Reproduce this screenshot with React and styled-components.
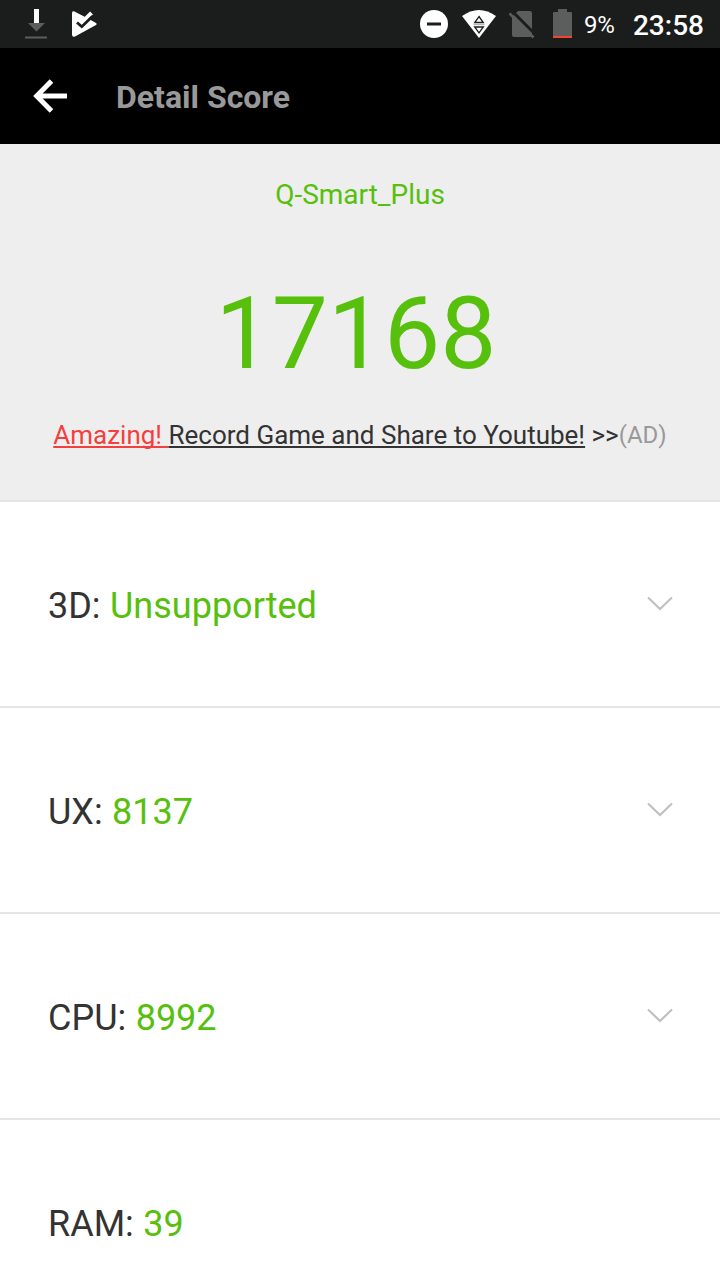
import React from 'react';
import styled, { createGlobalStyle } from 'styled-components';

const GlobalStyle = createGlobalStyle`
  body {
    margin: 0;
    background-color: #fff;
    font-family: Roboto, sans-serif;
    overflow: hidden;
  }
`;

const Screen = styled.div`
  width: 720px;
  height: 1280px;
  overflow: hidden;
  background-color: #fff;
`;

const StatusBar = styled.div`
  display: flex;
  justify-content: space-between;
  height: 48px;
  padding: 0 16px 0 24px;
  box-sizing: border-box;
  background-color: #1b1d1c;
  color: #fff;
`;

const Notifications = styled.div`
  display: flex;
  gap: 23px;
`;

const SystemIcons = styled.div`
  display: flex;
`;

const Icon = styled.svg`
  display: block;
  flex: none;
  margin-right: ${({ $gap }) => $gap || 0}px;
`;

const BatteryLevel = styled.span`
  margin-right: 18px;
  font-size: 24px;
  line-height: 50px;
`;

const Clock = styled.span`
  font-size: 28px;
  font-weight: 500;
  line-height: 51px;
`;

const TitleBar = styled.header`
  display: flex;
  align-items: center;
  height: 96px;
  padding-left: 32px;
  background-color: #000;
`;

const BackButton = styled.button`
  width: 36px;
  height: 36px;
  margin-right: 48px;
  padding: 0;
  border: none;
  background: none;
  cursor: pointer;
`;

const Title = styled.h1`
  margin: 0;
  padding-top: 2px;
  color: #999;
  font-size: 32px;
  font-weight: bold;
`;

const Summary = styled.section`
  display: flex;
  flex-direction: column;
  align-items: center;
  height: 358px;
  padding-top: 34px;
  box-sizing: border-box;
  border-bottom: 2px solid #e5e5e5;
  background-color: #eee;
`;

const DeviceName = styled.div`
  color: #56c00d;
  font-size: 28px;
  line-height: 33px;
`;

const TotalScore = styled.div`
  margin-top: 64px;
  padding-right: 8px;
  color: #56c00d;
  font-size: 100px;
  line-height: 118px;
`;

const Promo = styled.div`
  margin-top: 26px;
  color: #333;
  font-size: 26px;
  line-height: 32px;
  white-space: pre;
`;

const PromoLink = styled.span`
  color: ${({ $highlight }) => ($highlight ? '#f43f3f' : '#333')};
  text-decoration: underline;
  text-decoration-thickness: 2px;
  text-decoration-skip-ink: none;
  text-underline-offset: 2px;
`;

const AdLabel = styled.span`
  color: #999;
  font-size: 24px;
  vertical-align: 1px;
  line-height: 1;
`;

const ScoreRow = styled.div`
  display: flex;
  justify-content: space-between;
  align-items: center;
  height: 206px;
  padding: 0 47px 0 48px;
  box-sizing: border-box;
  border-bottom: 2px solid #e5e5e5;
  font-size: 36px;
  color: #333;
`;

const ScoreLabel = styled.div`
  padding-top: 4px;
`;

const ScoreValue = styled.span`
  margin-left: 0.5px;
  color: #56c00d;
`;

const scores = [
  { name: '3D', value: 'Unsupported', expandable: true },
  { name: 'UX', value: '8137', expandable: true },
  { name: 'CPU', value: '8992', expandable: true },
  { name: 'RAM', value: '39', expandable: false },
];

const DownloadIcon = () => (
  <Icon width="24" height="48">
    <rect x="10" y="9" width="5" height="14" fill="#fff" />
    <path d="M4 23h17l-8.500 8.500z" fill="#5c5e5d" />
    <rect x="1" y="36.500" width="22" height="2" fill="#5c5e5d" />
  </Icon>
);

const PlayCheckIcon = () => (
  <Icon width="28" height="48">
    <path
      d="M1 13Q1 10.500 3.500 11.500L17 18.500L25 23Q26.500 24 25 25L4 36.500Q1 37.500 1 34.500z"
      fill="#fff"
    />
    <path d="M14 19.500L20.500 13" stroke="#fff" strokeWidth="4" />
    <path d="M6 22.500L10.800 26.700L21.500 16.200" fill="none" stroke="#1b1d1c" strokeWidth="2.800" />
  </Icon>
);

const DoNotDisturbIcon = () => (
  <Icon width="28" height="48" $gap={14}>
    <circle cx="14" cy="24" r="14" fill="#fff" />
    <rect x="7" y="22.500" width="14" height="3" fill="#1b1d1c" />
  </Icon>
);

const WifiIcon = () => (
  <Icon width="34" height="48" $gap={13}>
    <path d="M0 16Q17 4 34 16L17 38z" fill="#fff" />
    <path
      d="M17 16.500L21.300 22.500H12.700zM17 32.800L21.300 27H12.700z"
      fill="none"
      stroke="#1b1d1c"
      strokeWidth="1.300"
    />
    <path d="M11.500 24.700H22.500" stroke="#999" strokeWidth="0.900" />
  </Icon>
);

const NoSimIcon = () => (
  <Icon width="26" height="48" $gap={18}>
    <path d="M9 11H21Q23 11 23 13V35Q23 37 21 37H5Q3 37 3 35V17z" fill="#5c5e5d" />
    <path d="M3 11L27 35" stroke="#1b1d1c" strokeWidth="3" />
    <path d="M0.500 13.500L24.500 37.500" stroke="#5c5e5d" strokeWidth="2.600" />
  </Icon>
);

const BatteryIcon = () => (
  <Icon width="19" height="48" $gap={12}>
    <path d="M5 9H14V12H18Q19 12 19 13V38H0V13Q0 12 1 12H5z" fill="#5c5e5d" />
    <rect y="36" width="19" height="2" fill="#f44336" />
  </Icon>
);

const BackArrow = () => (
  <Icon width="36" height="36">
    <path d="M35 18H5M19.500 3L4.700 18L19.500 33" fill="none" stroke="#fff" strokeWidth="5" />
  </Icon>
);

const Chevron = () => (
  <Icon width="26" height="16">
    <path d="M1 1.500L13 13L25 1.500" fill="none" stroke="#c0c0c0" strokeWidth="2.200" />
  </Icon>
);

const App = () => {
  return (
    <>
      <GlobalStyle />
      <Screen>
        <StatusBar>
          <Notifications>
            <DownloadIcon />
            <PlayCheckIcon />
          </Notifications>
          <SystemIcons>
            <DoNotDisturbIcon />
            <WifiIcon />
            <NoSimIcon />
            <BatteryIcon />
            <BatteryLevel>9%</BatteryLevel>
            <Clock>23:58</Clock>
          </SystemIcons>
        </StatusBar>
        <TitleBar>
          <BackButton aria-label="Back">
            <BackArrow />
          </BackButton>
          <Title>Detail Score</Title>
        </TitleBar>
        <Summary>
          <DeviceName>Q-Smart_Plus</DeviceName>
          <TotalScore>17168</TotalScore>
          <Promo>
            <PromoLink $highlight>Amazing! </PromoLink>
            <PromoLink>Record Game and Share to Youtube!</PromoLink>
            {' >>'}
            <AdLabel>(AD)</AdLabel>
          </Promo>
        </Summary>
        {scores.map((score) => (
          <ScoreRow key={score.name}>
            <ScoreLabel>
              {score.name}: <ScoreValue>{score.value}</ScoreValue>
            </ScoreLabel>
            {score.expandable && <Chevron />}
          </ScoreRow>
        ))}
      </Screen>
    </>
  );
};

export default App;
